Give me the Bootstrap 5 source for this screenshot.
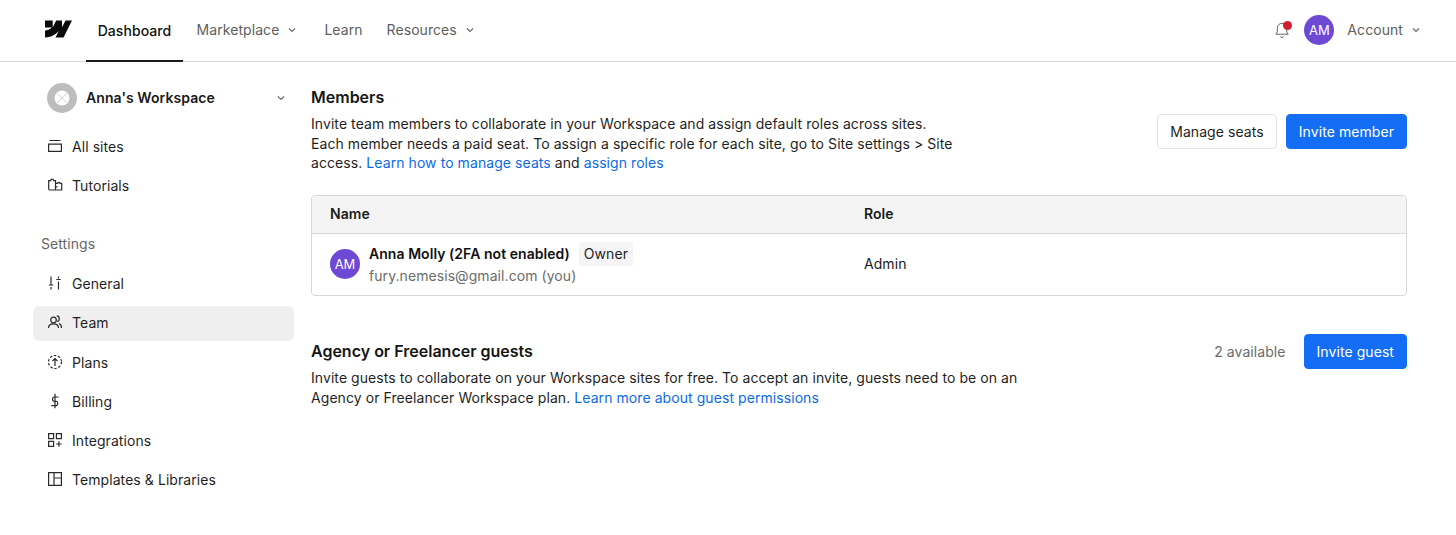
<!doctype html>
<html lang="en"><head><meta charset="utf-8"><title>Team</title>
<link href="https://cdn.jsdelivr.net/npm/bootstrap@5.3.0/dist/css/bootstrap.min.css" rel="stylesheet">
<style>
html,body{height:535px;overflow:hidden}
body{font-family:Inter,"Liberation Sans",sans-serif;font-size:14px;line-height:20px;letter-spacing:.07px;color:#1a1a1a;background:#fff}
a{text-decoration:none}
.topbar{height:62px;border-bottom:1px solid #d9d9d9;padding:0 35px 1px 45px}
.logo-wm{width:27px;height:18px;margin-right:14px;margin-top:-3px}
.tab-link{height:61px;padding:0 12px;display:flex;align-items:center;color:#5e5e5e}
.tab-link.on{color:#111;font-weight:500;border-bottom:2px solid #1a1a1a;height:62px;margin-bottom:-1px;width:97px;padding:2px 0 0;justify-content:center;margin-right:1.500px}
.tab-gap{margin-right:3px}
.chev{width:10px;height:10px;margin-left:8px;fill:none;stroke:#6b6b6b;stroke-width:1.2}
.ava{width:30px;height:30px;border-radius:50%;background:#6d49d6;color:#fff;font-size:13px;letter-spacing:0;display:flex;align-items:center;justify-content:center;flex:none}
.bell-wrap{position:relative;width:14px;height:16px;margin-right:15px}
.bell-dot{position:absolute;top:-1.500px;right:-3px;width:9px;height:9px;border-radius:50%;background:#d21f2e}
.acct{color:#5e5e5e;margin-left:13px}
.side{width:294px;flex:none;padding:20px 0 0 33px}
.ws-row{height:32px;padding:0 8px 0 14px;margin-bottom:15.500px}
.ws-logo{width:30px;height:30px;margin-right:9px}
.ws-name{font-weight:600;color:#1a1a1a}
.side-link{height:35px;margin-bottom:4.200px;padding:0 0 0 14px;border-radius:6px;display:flex;align-items:center;color:#1f1f1f}
.side-link.on{background:#efefef}
.side-ico{width:16px;height:16px;margin-right:9px;margin-top:-2px;fill:none;stroke:#2b2b2b;stroke-width:1.200;flex:none}
.side-head{color:#666;padding-left:8px;margin:30px 0 13px;height:20px}
.main{flex:1;padding:25px 49px 0 17px}
.sec-title{font-size:16px;font-weight:600;line-height:20px;letter-spacing:0;margin:0 0 7px;color:#151515}
.desc{color:#1f1f1f;line-height:19.700px;margin:0}
.desc a{color:#0d6ae6}
.btn-wf{font-size:14px;height:35px;padding:0 12px;border-radius:4px;line-height:33px;letter-spacing:.07px}
.btn-wf-blue{background:#146ef5;border:1px solid #146ef5;color:#fff}
.btn-wf-white{background:#fff;border:1px solid #e3e3e3;color:#1f1f1f}
.btn-actions{height:60px;padding-top:27px;gap:9px}
.members-top{height:100px}
.panel{border:1px solid #d9d9d9;border-radius:4px;margin-top:8px;height:101px;overflow:hidden}
.panel-head{height:38px;background:#f4f4f4;border-bottom:1px solid #d9d9d9;font-weight:600;color:#1a1a1a;padding-bottom:1px}
.col-name{width:552px;padding-left:18px;flex:none}
.panel-row{height:61px;padding-bottom:1px}
.m-ava{margin-right:9px}
.m-name{font-weight:600;color:#111;letter-spacing:.05px}
.owner-tag{background:#f5f5f5;border-radius:2px;padding:2px 5px;height:24px;margin-left:9px;color:#1f1f1f}
.m-mail{color:#6b6b6b}
.guest-wrap{margin-top:38px}
.avail{color:#6b6b6b;margin-right:18px}
.guest-title{margin-top:7px}
.guest-actions{height:35px}
</style></head><body>
<nav class="topbar d-flex align-items-center">
  <svg class="logo-wm" viewBox="0 0 27 18"><path fill="#0a0a0a" d="M27 .5 18.500 17.500H10.500L14 10.400C11 14.400 6.800 16.900 0 17.500V10.500C0 10.500 4.400 10.200 6.800 7.500H0V.6H7.700V6.800H8L11.200.6H17V6.800H17.300L20.500.5Z"/></svg>
  <a class="tab-link on" href="#">Dashboard</a>
  <a class="tab-link tab-gap" href="#">Marketplace<svg class="chev" viewBox="0 0 10 10"><path d="M2 3.500 5 6.500 8 3.500"/></svg></a>
  <a class="tab-link" href="#">Learn</a>
  <a class="tab-link" href="#">Resources<svg class="chev" viewBox="0 0 10 10"><path d="M2 3.500 5 6.500 8 3.500"/></svg></a>
  <div class="ms-auto d-flex align-items-center">
    <div class="bell-wrap"><svg class="d-block" width="14" height="16" viewBox="0 0 14 16" fill="none" stroke="#666" stroke-width="1"><path d="M.8 12.200h12.400l-1.500-2.200V6a4.700 4.700 0 0 0-9.400 0v4ZM5.200 14.500a2.200 2.200 0 0 0 3.600 0"/></svg><span class="bell-dot"></span></div>
    <div class="ava">AM</div>
    <span class="acct">Account</span><svg class="chev" viewBox="0 0 10 10"><path d="M2 3.500 5 6.500 8 3.500"/></svg>
  </div>
</nav>
<div class="d-flex">
  <aside class="side">
    <div class="ws-row d-flex align-items-center">
      <svg class="ws-logo" viewBox="0 0 30 30"><circle cx="15" cy="15" r="15" fill="#bdbdbd"/><circle cx="15" cy="15" r="7.500" fill="#fff"/><path d="M9.500 9.500 20.500 20.500M20.500 9.500 9.500 20.500" stroke="#d2d2d2" stroke-width="1"/></svg>
      <span class="ws-name">Anna's Workspace</span>
      <svg class="chev ms-auto" viewBox="0 0 10 10"><path d="M2 3.500 5 6.500 8 3.500"/></svg>
    </div>
    <a class="side-link" href="#"><svg class="side-ico" viewBox="0 0 16 16"><path d="M2.500 2.500h11M1.600 6.100h12.800v7.300H1.600z"/></svg>All sites</a>
    <a class="side-link" href="#"><svg class="side-ico" viewBox="0 0 16 16"><path d="M1.700 3.700h2a1.500 1.500 0 0 1 3 0h1.800v9.300H3a1.300 1.300 0 0 1-1.300-1.300ZM8.500 6.300h2.100a1.300 1.300 0 0 1 2.500 0h1.600V13H8.500M8.500 9.800h2"/></svg>Tutorials</a>
    <div class="side-head">Settings</div>
    <a class="side-link" href="#"><svg class="side-ico" viewBox="0 0 16 16"><path d="M4 1.500v8M1.800 10h4.400M4 12v2.500M11.500 1.500v2M9.300 4.500h4.400M11.500 6.500v8"/></svg>General</a>
    <a class="side-link on" href="#"><svg class="side-ico" viewBox="0 0 16 16"><circle cx="6.500" cy="6" r="2.800"/><path d="M1.500 14c0-5.500 10-5.500 10 0M9.800 1.800c3.200 0 3.200 5.300.4 5.600M12 9.500c1.500.7 2.500 2.300 2.500 4.500"/></svg>Team</a>
    <a class="side-link" href="#"><svg class="side-ico" viewBox="0 0 16 16"><circle cx="8" cy="8" r="6.500" stroke-dasharray="2.400 1.700"/><path d="M8 12V4.500M5.500 7 8 4.500 10.500 7"/></svg>Plans</a>
    <a class="side-link" href="#"><svg class="side-ico" viewBox="0 0 16 16"><path d="M8 .8v14.400M11.500 4H7a2.300 2.300 0 0 0 0 4.300h2.300a2.300 2.300 0 0 1 0 4.300H4.300"/></svg>Billing</a>
    <a class="side-link" href="#"><svg class="side-ico" viewBox="0 0 16 16"><path d="M1.600 1.600h5v5h-5zM9.400 1.600h5v5h-5zM1.600 9.400h5v5h-5zM11.900 9.200v5.600M9.100 12h5.600"/></svg>Integrations</a>
    <a class="side-link" href="#"><svg class="side-ico" viewBox="0 0 16 16"><path d="M1.600 1.600h12.800v12.800H1.600zM7 1.600v12.800M7 7h7.400"/></svg>Templates &amp; Libraries</a>
  </aside>
  <main class="main">
    <div class="members-top d-flex justify-content-between">
      <div style="width:650px">
        <h2 class="sec-title">Members</h2>
        <p class="desc">Invite team members to collaborate in your Workspace and assign default roles across sites.<br>Each member needs a paid seat. To assign a specific role for each site, go to Site settings &gt; Site access. <a href="#">Learn how to manage seats</a> and <a href="#">assign roles</a></p>
      </div>
      <div class="d-flex btn-actions">
        <button class="btn btn-wf btn-wf-white">Manage seats</button>
        <button class="btn btn-wf btn-wf-blue">Invite member</button>
      </div>
    </div>
    <div class="panel">
      <div class="panel-head d-flex align-items-center"><div class="col-name">Name</div><div>Role</div></div>
      <div class="panel-row d-flex align-items-center">
        <div class="col-name d-flex align-items-center">
          <div class="ava m-ava">AM</div>
          <div>
            <div class="d-flex align-items-center"><span class="m-name">Anna Molly (2FA not enabled)</span><span class="owner-tag">Owner</span></div>
            <div class="m-mail">fury.nemesis@gmail.com (you)</div>
          </div>
        </div>
        <div>Admin</div>
      </div>
    </div>
    <div class="guest-wrap d-flex justify-content-between">
      <div style="width:720px">
        <h2 class="sec-title guest-title">Agency or Freelancer guests</h2>
        <p class="desc">Invite guests to collaborate on your Workspace sites for free. To accept an invite, guests need to be on an Agency or Freelancer Workspace plan. <a href="#">Learn more about guest permissions</a></p>
      </div>
      <div class="d-flex align-items-center guest-actions"><span class="avail">2 available</span><button class="btn btn-wf btn-wf-blue">Invite guest</button></div>
    </div>
  </main>
</div>
</body></html>
